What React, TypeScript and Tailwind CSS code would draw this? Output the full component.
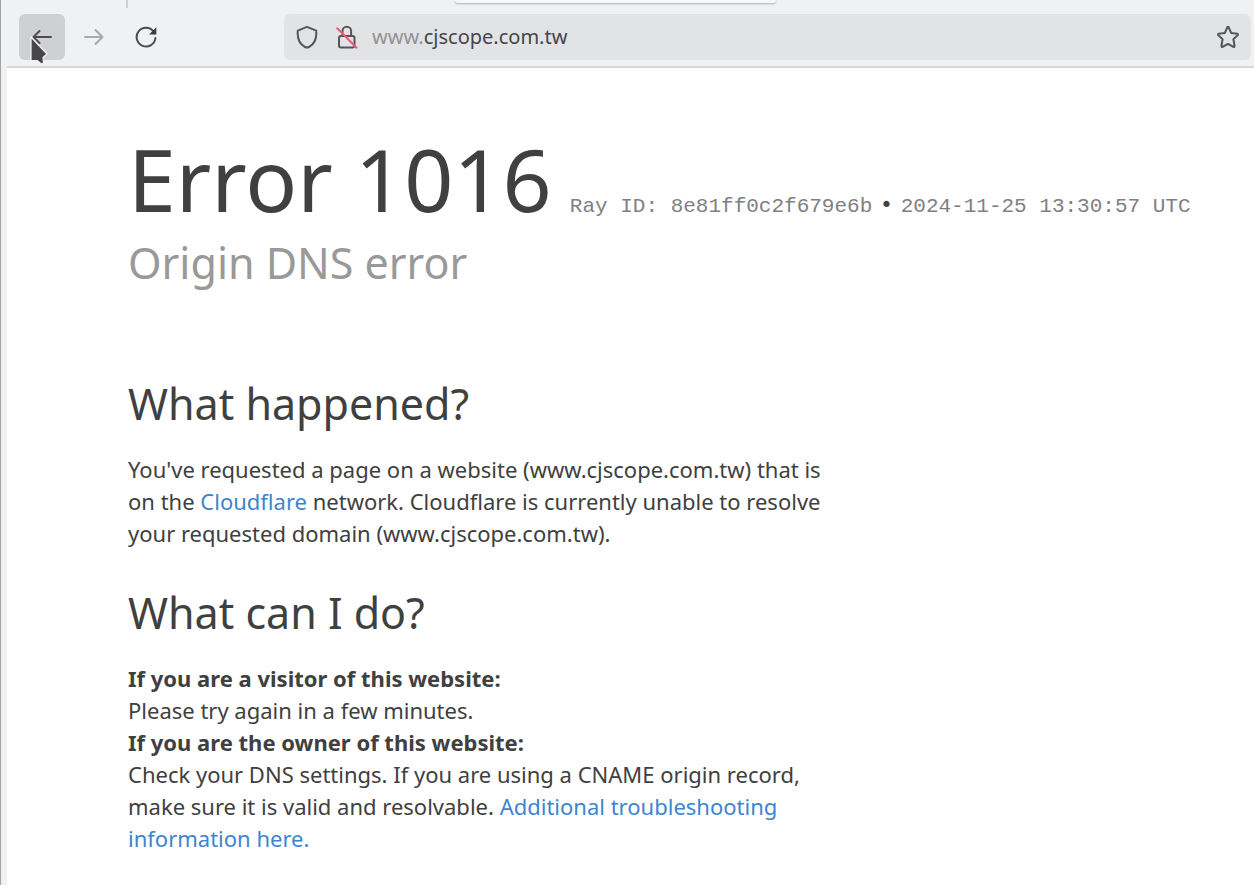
const rayDetails = {
  id: '8e81ff0c2f679e6b',
  time: '2024-11-25 13:30:57 UTC',
};

function TabStrip() {
  return (
    <div className="flex h-2 items-start pl-[119px]">
      <div className="h-2 w-[2px] bg-[#cfd0d3]" />
      <div className="ml-[327px] h-[3px] w-[321px] rounded-b bg-[#f7f7f8] shadow-[0_1px_2px_rgba(0,0,0,0.28)]" />
    </div>
  );
}

function BackIcon() {
  return (
    <svg width="20" height="18" viewBox="0 0 20 18" fill="none" stroke="#4c4c50" strokeWidth="2" strokeLinecap="round" strokeLinejoin="round">
      <path d="M19 9H2M7.500 3 1.500 9l6 6" />
    </svg>
  );
}

function ForwardIcon() {
  return (
    <svg width="20" height="18" viewBox="0 0 20 18" fill="none" stroke="#a9a9ac" strokeWidth="2" strokeLinecap="round" strokeLinejoin="round">
      <path d="M1 9h17M11.500 2l7 7-7 7" />
    </svg>
  );
}

function ReloadIcon() {
  return (
    <svg width="22" height="22" viewBox="0 0 22 22" fill="none">
      <path d="M18.600 5.500A9.400 9.400 0 1 0 20.400 12" stroke="#4c4c50" strokeWidth="2" strokeLinecap="round" />
      <path d="M21.300 1.200v7.200h-7.200z" fill="#3c3c40" />
    </svg>
  );
}

function ShieldIcon() {
  return (
    <svg width="22" height="24" viewBox="0 0 22 24" fill="none" stroke="#55555a" strokeWidth="2" strokeLinejoin="round">
      <path d="M11 1.800 1.800 5.600c-.5 5.200.5 12.800 7.200 16.400 1.300.7 2.700.7 4 0 6.700-3.600 7.700-11.200 7.200-16.400z" />
    </svg>
  );
}

function InsecureIcon() {
  return (
    <svg width="22" height="24" viewBox="0 0 22 24" fill="none">
      <rect x="3" y="11" width="15.500" height="11.500" rx="2" stroke="#55555a" strokeWidth="2" />
      <path d="M6.500 11V6a4.300 4.300 0 0 1 8.600 0v5" stroke="#55555a" strokeWidth="2" />
      <path d="M1.300 3.200 20.500 22.800" stroke="#ec5878" strokeWidth="2" strokeLinecap="round" />
    </svg>
  );
}

function StarIcon() {
  return (
    <svg width="24" height="24" viewBox="0 0 24 24" fill="none" stroke="#55555a" strokeWidth="2" strokeLinejoin="round">
      <path d="M11.300 2.300c.3-.6 1.100-.6 1.400 0L15.200 8l6.100.7c.7.1 1 .9.5 1.400L17.400 14.300l1.200 6.700c.1.700-.6 1.200-1.200.9L12 18.900l-5.400 3c-.6.3-1.300-.2-1.200-.9l1.200-6.700-4.400-4.200c-.5-.5-.2-1.300.5-1.400L8.800 8z" />
    </svg>
  );
}

function Pointer() {
  return (
    <svg className="pointer-events-none absolute left-[11px] top-[21px]" width="20" height="30" viewBox="0 0 20 30">
      <path d="M1 2v23.500h6l4.500 3.500 2-1-.5-5.500 4-3.500z" fill="#47474a" stroke="#f4f4f5" strokeWidth="1.200" strokeLinejoin="round" />
    </svg>
  );
}

function Toolbar() {
  return (
    <div className="flex items-center gap-1.5 border-b-2 border-[#d8d9dc] pt-1.5 pr-[3px] pb-1.5 pl-3">
      <button aria-label="Back" className="relative flex h-[46px] w-[46px] shrink-0 items-center justify-center rounded-md bg-[#cfd0d2]">
        <BackIcon />
        <Pointer />
      </button>
      <button aria-label="Forward" className="flex h-[46px] w-[46px] shrink-0 items-center justify-center rounded-md">
        <ForwardIcon />
      </button>
      <button aria-label="Reload" className="flex h-[46px] w-[46px] shrink-0 items-center justify-center rounded-md">
        <ReloadIcon />
      </button>
      <div className="ml-[109px] flex h-[46px] flex-1 items-center rounded-md bg-[#e2e3e5] pr-[11px] pl-3">
        <button aria-label="Tracking protection">
          <ShieldIcon />
        </button>
        <button aria-label="Connection is not secure" className="ml-[18px]">
          <InsecureIcon />
        </button>
        <a href="http://www.cjscope.com.tw" className="ml-3.5 text-xl leading-8 text-[#45454a]">
          <span className="text-[#929296]">www.</span>cjscope.com.tw
        </a>
        <button aria-label="Bookmark this page" className="ml-auto">
          <StarIcon />
        </button>
      </div>
    </div>
  );
}

function ErrorPage() {
  return (
    <main className="flex-1 bg-white px-[121px] pt-[51px] pb-7 text-[22px] leading-8 text-[#404040]">
      <header>
        <h1 className="-mr-[100px] flex flex-wrap items-baseline gap-x-[18px]">
          <span className="text-[86px] leading-[120px]">Error 1016</span>
          <span className="flex items-baseline gap-x-2 font-['Liberation_Mono',monospace] text-[21px] leading-8 text-[#808083]">
            <span>Ray ID: {rayDetails.id}</span>
            <span className="font-['DejaVu_Sans',sans-serif] text-[#404040]">&bull;</span>
            <span>{rayDetails.time}</span>
          </span>
        </h1>
        <h2 className="text-[43px] leading-[48px] text-[#999999]">Origin DNS error</h2>
      </header>

      <section className="mt-[89px] max-w-[700px]">
        <h2 className="text-[43px] leading-[56px]">What happened?</h2>
        <p className="mt-[21px]">
          You've requested a page on a website (www.cjscope.com.tw) that is on the{' '}
          <a href="https://www.cloudflare.com/" className="text-[#3d85cf]">Cloudflare</a> network. Cloudflare is
          currently unable to resolve your requested domain (www.cjscope.com.tw).
        </p>
      </section>

      <section className="mt-9 max-w-[700px]">
        <h2 className="text-[43px] leading-[56px]">What can I do?</h2>
        <div className="mt-[21px]">
          <h3 className="font-bold">If you are a visitor of this website:</h3>
          <p>Please try again in a few minutes.</p>
          <h3 className="font-bold">If you are the owner of this website:</h3>
          <p>
            Check your DNS settings. If you are using a CNAME origin record, make sure it is valid and resolvable.{' '}
            <a href="#troubleshooting" className="text-[#3d85cf]">Additional troubleshooting information here.</a>
          </p>
        </div>
      </section>
    </main>
  );
}

export default function App() {
  return (
    <div className="flex min-h-screen flex-col border-l border-[#a3a3a6] bg-[#f0f1f3] pl-1.5 font-['Noto_Sans',sans-serif]">
      <TabStrip />
      <Toolbar />
      <ErrorPage />
    </div>
  );
}
